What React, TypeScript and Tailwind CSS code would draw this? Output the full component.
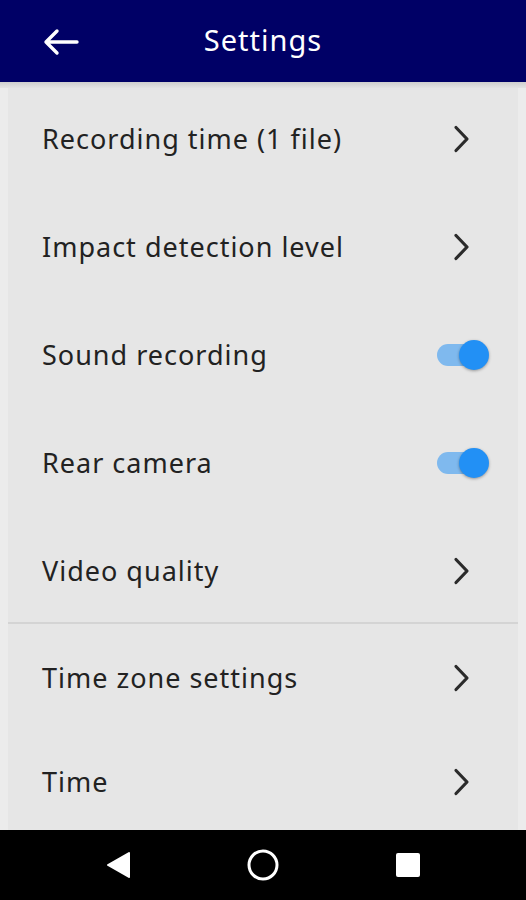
import React from "react";

type Row = { label: string; kind: "link" | "toggle" };

const groupA: Row[] = [
  { label: "Recording time (1 file)", kind: "link" },
  { label: "Impact detection level", kind: "link" },
  { label: "Sound recording", kind: "toggle" },
  { label: "Rear camera", kind: "toggle" },
  { label: "Video quality", kind: "link" },
];

const groupB: Row[] = [
  { label: "Time zone settings", kind: "link" },
  { label: "Time", kind: "link" },
];

function Chevron() {
  return (
    <svg width="24" height="30" viewBox="0 0 24 30" className="-mr-[3px]">
      <path d="M6 3.5 L17 15 L6 26.5" fill="none" stroke="#2b2b2b" strokeWidth="3.2" strokeLinecap="round" strokeLinejoin="round" />
    </svg>
  );
}

function Toggle() {
  return (
    <div className="relative w-[54px] h-[30px] -mr-[20px]">
      <div className="absolute left-0 top-[4px] w-[46px] h-[22px] rounded-full bg-[#7fb9ee]" />
      <div className="absolute right-[2px] top-0 w-[30px] h-[30px] rounded-full bg-[#2290f5] shadow-[0_1px_3px_rgba(0,0,0,0.35)]" />
    </div>
  );
}

function SettingRow({ row, h }: { row: Row; h: string }) {
  return (
    <div className={`flex items-center justify-between pl-[34px] pr-[47px] ${h}`}>
      <span className="text-[27px] tracking-[1px] text-[#222]">{row.label}</span>
      {row.kind === "link" ? <Chevron /> : <Toggle />}
    </div>
  );
}

export default function App() {
  return (
    <div
      className="w-[526px] h-[900px] flex flex-col bg-[#ececec] overflow-hidden"
      style={{ fontFamily: '"Noto Sans", "Open Sans", sans-serif' }}
    >
      <header className="h-[82px] shrink-0 bg-[#000066] flex items-center relative">
        <svg width="40" height="30" viewBox="0 0 40 30" className="absolute left-[41px] top-[27px]">
          <path d="M36 15 H5 M16 4 L5 15 L16 26" fill="none" stroke="white" strokeWidth="3.4" strokeLinecap="round" strokeLinejoin="round" />
        </svg>
        <h1 className="w-full text-center text-white text-[29px] tracking-[1px] pb-[2px]">Settings</h1>
      </header>
      <div className="h-[6px] shrink-0 bg-gradient-to-b from-[#cfcfcf] to-[#e4e4e4]" />
      <main className="flex-1 mx-[8px] bg-[#e6e6e6] min-h-0 overflow-hidden">
        <div className="-mt-[3px]">
          {groupA.map((r) => (
            <SettingRow key={r.label} row={r} h="h-[108px]" />
          ))}
        </div>
        <div className="relative h-[2px] -mt-[3px] bg-[#d4d4d4]" />
        <div className="pt-[2px]">
          {groupB.map((r) => (
            <SettingRow key={r.label} row={r} h="h-[104px]" />
          ))}
        </div>
      </main>
      <nav className="h-[70px] shrink-0 bg-black flex items-center justify-center gap-[115px]">
        <svg width="26" height="30" viewBox="0 0 26 30">
          <path d="M24 3 L3 15 L24 27 Z" fill="white" stroke="white" strokeWidth="2" strokeLinejoin="round" />
        </svg>
        <svg width="34" height="34" viewBox="0 0 34 34">
          <circle cx="17" cy="17" r="14" fill="none" stroke="white" strokeWidth="3" />
        </svg>
        <svg width="26" height="26" viewBox="0 0 26 26">
          <rect x="1" y="1" width="24" height="24" rx="2" fill="white" />
        </svg>
      </nav>
    </div>
  );
}
